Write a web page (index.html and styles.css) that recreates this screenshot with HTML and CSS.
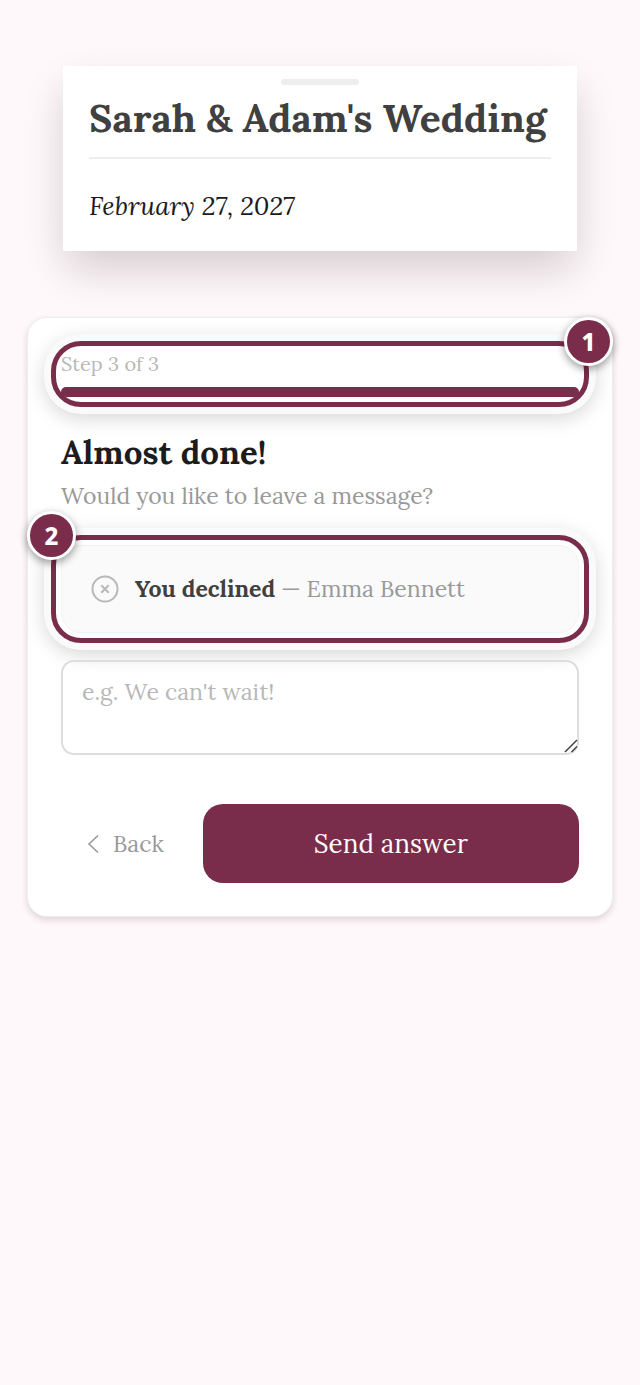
FILE: index.html
```html
<!DOCTYPE html>
<html lang="en">
<head>
<meta charset="utf-8">
<meta name="viewport" content="width=device-width, initial-scale=1">
<title>Sarah &amp; Adam's Wedding</title>
<link rel="stylesheet" href="styles.css">
</head>
<body>
<div class="page">
  <header class="invite">
    <span class="grip"></span>
    <h1 class="invite-title">Sarah &amp; Adam's Wedding</h1>
    <p class="invite-date">February 27, 2027</p>
  </header>

  <main class="card">
    <form class="form">
      <div class="callout step">
        <span class="step-label">Step 3 of 3</span>
        <div class="track"><div class="fill" style="width:100%"></div></div>
        <span class="badge badge-right">1</span>
      </div>

      <div class="intro">
        <h2 class="heading">Almost done!</h2>
        <label class="sub" for="message">Would you like to leave a message?</label>
      </div>

      <div class="callout status">
        <svg class="status-icon" viewBox="0 0 28 28" aria-hidden="true">
          <circle cx="14" cy="14" r="12.5"/>
          <path d="M10.3 10.3l7.400 7.400M17.700 10.3l-7.400 7.400"/>
        </svg>
        <p class="status-text"><strong>You declined</strong> — Emma Bennett</p>
        <span class="badge badge-left">2</span>
      </div>

      <div class="field">
        <textarea class="message" id="message" placeholder="e.g. We can't wait!"></textarea>
        <svg class="handle" viewBox="0 0 14 14" aria-hidden="true"><path d="M1 13L13 1M7.500 13L13 7.500"/></svg>
      </div>

      <div class="actions">
        <button class="back" type="button">
          <svg class="chevron" viewBox="0 0 12 20" aria-hidden="true"><path d="M11 1.500L2 10l9 8.500"/></svg>
          Back
        </button>
        <button class="send" type="submit">Send answer</button>
      </div>
    </form>
  </main>
</div>
</body>
</html>
```
FILE: styles.css
```css
* {
  box-sizing: border-box;
}

body {
  margin: 0;
  min-height: 100vh;
  background: #fef8fa;
  color: #1c1c1c;
  font-family: Lora, "Liberation Serif", serif;
}

h1, h2, p {
  margin: 0;
}

.page {
  display: flex;
  flex-direction: column;
  gap: 66px;
  padding: 66px 27px 0;
}

.invite {
  display: flex;
  flex-direction: column;
  margin: 0 36px;
  padding: 13px 26px 26px;
  background: #fff;
  box-shadow: 0 20px 40px -4px rgba(40, 20, 30, 0.2);
}

.grip {
  align-self: center;
  width: 78px;
  height: 6px;
  border-radius: 3px;
  background: #eee;
}

.invite-title {
  padding: 7px 0 13px;
  border-bottom: 2px solid #eee;
  color: #404040;
  font-size: 39px;
  line-height: 52px;
  white-space: nowrap;
}

.invite-date {
  padding: 27px 0 0;
  font-size: 26px;
  font-style: italic;
  line-height: 39px;
}

.card {
  padding: 33px;
  border: 1px solid #eee;
  border-radius: 20px;
  background: #fff;
  box-shadow: 0 3px 6px rgba(60, 30, 40, 0.16);
}

.form {
  display: flex;
  flex-direction: column;
}

.callout {
  position: relative;
}

.callout::after {
  content: "";
  position: absolute;
  inset: -10px;
  border: 5px solid #7a2d4b;
  border-radius: 30px;
  box-shadow: 0 0 0 7px #fafafa, 0 5px 20px 6px rgba(0, 0, 0, 0.17);
  pointer-events: none;
}

.badge {
  position: absolute;
  z-index: 1;
  top: -34px;
  display: grid;
  place-items: center;
  width: 49px;
  height: 49px;
  border: 3px solid #fff;
  border-radius: 50%;
  background: #7a2d4b;
  box-shadow: 0 3px 9px rgba(0, 0, 0, 0.4);
  color: #fff;
  font-family: "Noto Sans", "Open Sans", sans-serif;
  font-size: 24px;
  font-weight: 800;
}

.badge-right {
  right: -34px;
}

.badge-left {
  top: -35px;
  left: -35px;
}

.step-label {
  display: block;
  padding-bottom: 10px;
  color: #b8b8b8;
  font-size: 20px;
  line-height: 26px;
}

.track {
  height: 10px;
  overflow: hidden;
  border-radius: 5px;
  background: #eee;
}

.fill {
  height: 100%;
  background: #7a2d4b;
}

.intro {
  display: flex;
  flex-direction: column;
  padding: 34px 0 32px;
}

.heading {
  font-size: 33px;
  line-height: 42px;
}

.sub {
  padding-top: 6px;
  color: #999;
  font-size: 23px;
  line-height: 34px;
}

.status {
  display: flex;
  align-items: center;
  gap: 16px;
  padding: 26px 29px;
  border: 1px solid #f2f2f2;
  border-radius: 20px;
  background: #fafafa;
}

.status::after {
  inset: -11px;
}

.status-icon {
  flex: none;
  width: 28px;
  height: 28px;
  fill: none;
  stroke: #b8b8b8;
  stroke-width: 2;
}

.status-text {
  color: #999;
  font-size: 23px;
  line-height: 34px;
}

.status-text strong {
  color: #404040;
}

.field {
  position: relative;
  margin-top: 27px;
}

.message {
  display: block;
  width: 100%;
  height: 95px;
  padding: 13px 19px;
  border: 2px solid #ddd;
  border-radius: 13px;
  background: transparent;
  color: #404040;
  font-family: inherit;
  font-size: 23px;
  line-height: 34px;
  resize: none;
}

.message::placeholder {
  color: #b8b8b8;
}

.handle {
  position: absolute;
  right: 1px;
  bottom: 2px;
  width: 14px;
  height: 14px;
  fill: none;
  stroke: #444;
  stroke-width: 1.500;
  pointer-events: none;
}

.actions {
  display: flex;
  gap: 13px;
  padding-top: 49px;
}

.back,
.send {
  height: 79px;
  border: 0;
  border-radius: 20px;
  font-family: inherit;
  cursor: pointer;
}

.back {
  display: flex;
  align-items: center;
  gap: 14px;
  padding: 0 26px;
  background: none;
  color: #999;
  font-size: 23px;
}

.chevron {
  width: 12px;
  height: 20px;
  fill: none;
  stroke: currentColor;
  stroke-width: 1.6;
}

.send {
  flex: 1;
  background: #7a2d4b;
  color: #fff;
  font-size: 26px;
}
```
